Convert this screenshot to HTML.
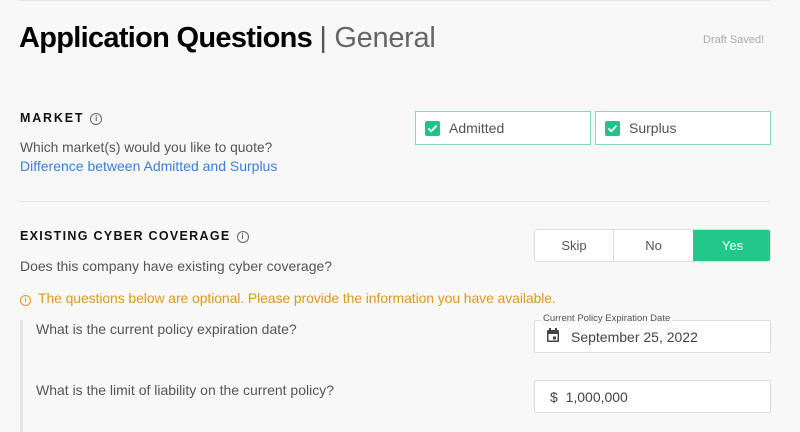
<html><head><style>
body{margin:0;width:800px;height:432px;background:#f8f8f8;font-family:"Liberation Sans",sans-serif;position:relative;overflow:hidden}
.a{position:absolute;white-space:nowrap}
.cb{position:absolute;border:1.5px solid #7fdcb8;background:#fff;box-sizing:border-box;height:34px}
.chk{position:absolute;left:9px;top:9px;width:15px;height:15px;background:#22c38a;border-radius:2px}
.q{color:#555;font-size:14px}
.lab{font-size:12.5px;font-weight:bold;letter-spacing:1.3px;color:#111}
.info{display:inline-block;width:10px;height:10px;border:1.3px solid #666;border-radius:50%;font-size:8px;line-height:10px;text-align:center;color:#666;font-weight:bold;letter-spacing:0;vertical-align:1px;margin-left:6px}
.inp{position:absolute;background:#fff;border:1px solid #ddd;box-sizing:border-box}
</style></head><body>
<div class="a" style="left:20px;top:0;width:750px;height:1px;background:#dde6f4"></div>
<div class="a" style="left:19px;top:22px;font-size:29px;font-weight:bold;color:#000;letter-spacing:-0.7px">Application Questions <span style="font-weight:normal;color:#555;letter-spacing:-0.3px">| <span style="color:#666">General</span></span></div>
<div class="a" style="left:703px;top:34px;font-size:11px;color:#aaa">Draft Saved!</div>

<div class="a lab" style="left:20px;top:111px;letter-spacing:1.8px">MARKET<span class="info">i</span></div>
<div class="a q" style="left:20px;top:140px;font-size:13.8px">Which market(s) would you like to quote?</div>
<div class="a" style="left:20px;top:158px;font-size:14px;color:#3a7fdc">Difference between Admitted and Surplus</div>
<div class="cb" style="left:415px;top:111px;width:176px"><div class="chk"><svg width="15" height="15" viewBox="0 0 15 15"><path d="M3.5 7.5l2.7 2.7 5.3-5.5" stroke="#fff" stroke-width="1.8" fill="none"/></svg></div><span class="a" style="left:33px;top:8px;font-size:14px;color:#555">Admitted</span></div>
<div class="cb" style="left:595px;top:111px;width:176px"><div class="chk"><svg width="15" height="15" viewBox="0 0 15 15"><path d="M3.5 7.5l2.7 2.7 5.3-5.5" stroke="#fff" stroke-width="1.8" fill="none"/></svg></div><span class="a" style="left:33px;top:8px;font-size:14px;color:#555">Surplus</span></div>

<div class="a" style="left:20px;top:201px;width:750px;height:1px;background:#e6e6e6"></div>

<div class="a lab" style="left:20px;top:229px">EXISTING CYBER COVERAGE<span class="info">i</span></div>
<div class="a q" style="left:20px;top:258px">Does this company have existing cyber coverage?</div>
<div class="inp" style="left:534px;top:229px;width:237px;height:33px;border-radius:3px;overflow:hidden">
<div class="a" style="left:0;top:0;width:78px;height:31px;line-height:31px;text-align:center;font-size:13px;color:#555;border-right:1px solid #ddd">Skip</div>
<div class="a" style="left:79px;top:0;width:79px;height:31px;line-height:31px;text-align:center;font-size:13px;color:#555">No</div>
<div class="a" style="left:158px;top:0;width:79px;height:31px;line-height:31px;text-align:center;font-size:13px;color:#fff;background:#22c88a">Yes</div>
</div>

<div class="a" style="left:20px;top:290px;font-size:14px;color:#d99a1e;letter-spacing:-0.1px"><span style="display:inline-block;width:9px;height:9px;border:1.3px solid #d99a1e;border-radius:50%;font-size:7px;line-height:9px;text-align:center;font-weight:bold;vertical-align:1px;margin-right:7px">i</span>The questions below are optional. Please provide the information you have available.</div>

<div class="a" style="left:20px;top:320px;width:3px;height:112px;background:#e4e4e4"></div>
<div class="a q" style="left:36px;top:321px">What is the current policy expiration date?</div>
<div class="inp" style="left:534px;top:320px;width:237px;height:33px;border-radius:2px"></div>
<div class="a" style="left:541px;top:313px;font-size:9.5px;color:#555;background:#f8f8f8;padding:0 2px;line-height:12px">Current Policy Expiration Date</div>
<svg class="a" style="left:546px;top:327px" width="14" height="16" viewBox="0 0 14 16"><rect x="1" y="3" width="12" height="12" rx="1" fill="#444"/><rect x="3" y="1" width="2" height="3" fill="#444"/><rect x="9" y="1" width="2" height="3" fill="#444"/><rect x="2.5" y="7" width="9" height="6.5" fill="#fff"/><rect x="7" y="9.5" width="3" height="3" fill="#444"/></svg>
<div class="a" style="left:571px;top:329px;font-size:14px;color:#444">September 25, 2022</div>

<div class="a q" style="left:36px;top:382px">What is the limit of liability on the current policy?</div>
<div class="inp" style="left:534px;top:380px;width:237px;height:33px;border-radius:2px"></div>
<div class="a" style="left:550px;top:389px;font-size:14px;color:#444">$&nbsp;&nbsp;1,000,000</div>
</body></html>
